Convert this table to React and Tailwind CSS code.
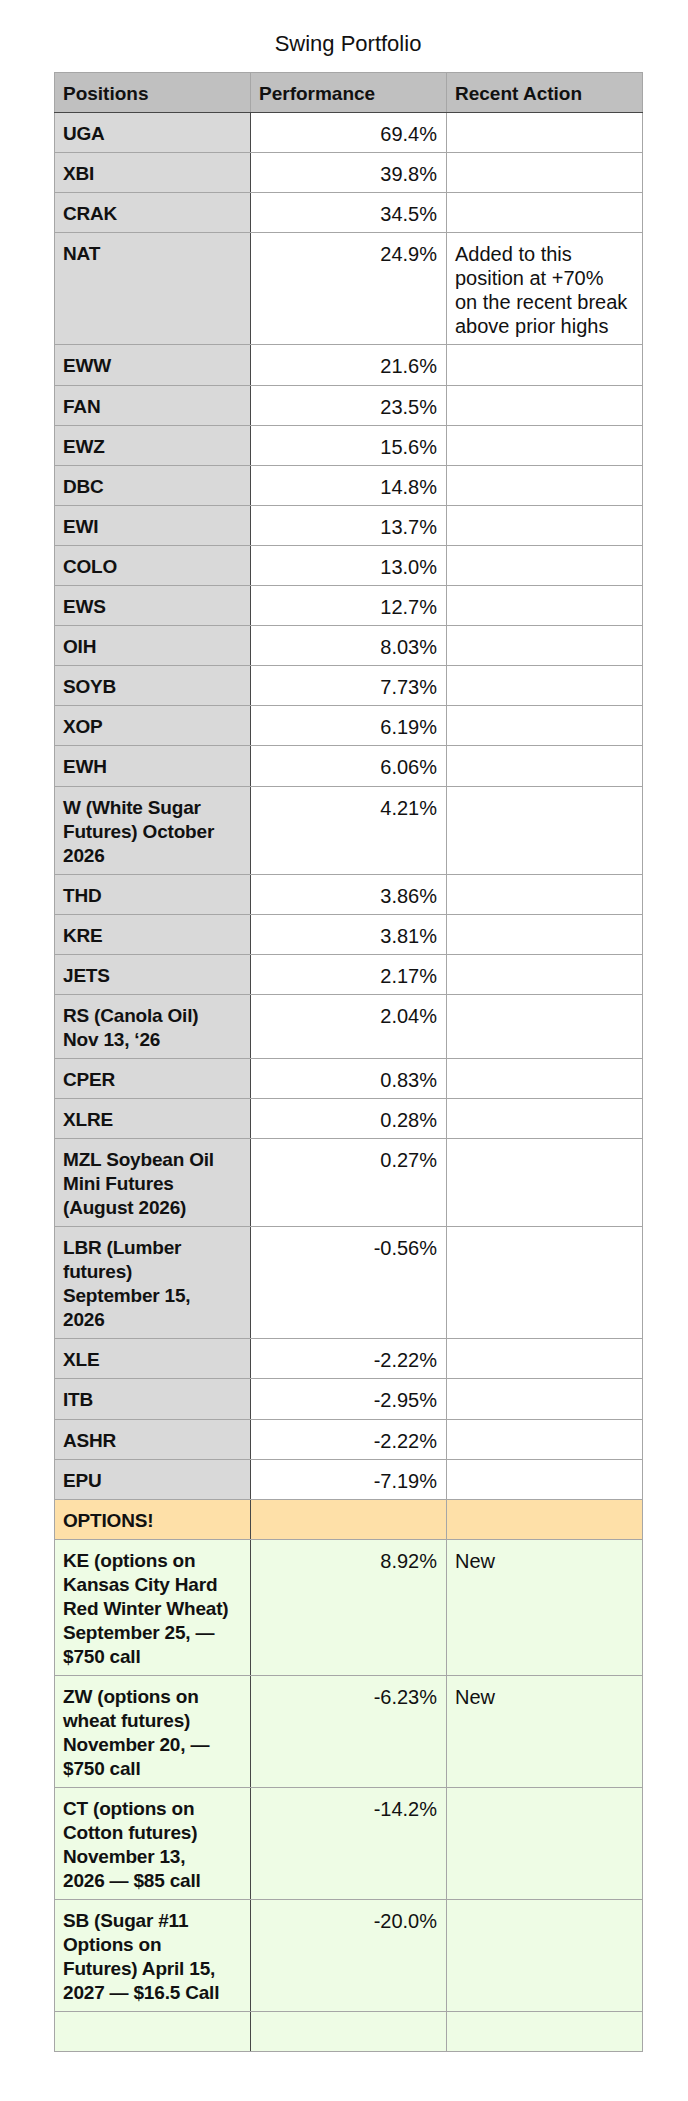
import React from "react";

const rows = [
  { pos: ["UGA"], perf: "69.4%" },
  { pos: ["XBI"], perf: "39.8%" },
  { pos: ["CRAK"], perf: "34.5%" },
  {
    pos: ["NAT"],
    perf: "24.9%",
    action: ["Added to this", "position at +70%", "on the recent break", "above prior highs"],
  },
  { pos: ["EWW"], perf: "21.6%" },
  { pos: ["FAN"], perf: "23.5%" },
  { pos: ["EWZ"], perf: "15.6%" },
  { pos: ["DBC"], perf: "14.8%" },
  { pos: ["EWI"], perf: "13.7%" },
  { pos: ["COLO"], perf: "13.0%" },
  { pos: ["EWS"], perf: "12.7%" },
  { pos: ["OIH"], perf: "8.03%" },
  { pos: ["SOYB"], perf: "7.73%" },
  { pos: ["XOP"], perf: "6.19%" },
  { pos: ["EWH"], perf: "6.06%" },
  { pos: ["W (White Sugar", "Futures) October", "2026"], perf: "4.21%" },
  { pos: ["THD"], perf: "3.86%" },
  { pos: ["KRE"], perf: "3.81%" },
  { pos: ["JETS"], perf: "2.17%" },
  { pos: ["RS (Canola Oil)", "Nov 13, \u201826"], perf: "2.04%" },
  { pos: ["CPER"], perf: "0.83%" },
  { pos: ["XLRE"], perf: "0.28%" },
  { pos: ["MZL Soybean Oil", "Mini Futures", "(August 2026)"], perf: "0.27%" },
  { pos: ["LBR (Lumber", "futures)", "September 15,", "2026"], perf: "-0.56%" },
  { pos: ["XLE"], perf: "-2.22%" },
  { pos: ["ITB"], perf: "-2.95%" },
  { pos: ["ASHR"], perf: "-2.22%" },
  { pos: ["EPU"], perf: "-7.19%" },
];

const options = [
  {
    pos: ["KE (options on", "Kansas City Hard", "Red Winter Wheat)", "September 25, \u2014", "$750 call"],
    perf: "8.92%",
    action: ["New"],
  },
  {
    pos: ["ZW (options on", "wheat futures)", "November 20, \u2014", "$750 call"],
    perf: "-6.23%",
    action: ["New"],
  },
  {
    pos: ["CT (options on", "Cotton futures)", "November 13,", "2026 \u2014 $85 call"],
    perf: "-14.2%",
  },
  {
    pos: ["SB (Sugar #11", "Options on", "Futures) April 15,", "2027 \u2014 $16.5 Call"],
    perf: "-20.0%",
  },
];

function Lines({ lines }) {
  if (!lines) return <>{"\u00a0"}</>;
  return lines.map((l, i) => (
    <React.Fragment key={i}>
      {i > 0 && <br />}
      {l}
    </React.Fragment>
  ));
}

const cellBase =
  "align-top pt-[9px] pb-[6.1px] leading-[24px] border border-[#a6a6a6] whitespace-nowrap";
const posCell =
  cellBase + " pl-2 pr-2 text-[19px] font-bold tracking-[-0.01em] border-r-[#474747]";
const perfCell = cellBase + " pl-2 pr-[9px] text-right text-[20px]";
const actCell = cellBase + " pl-2 pr-2 text-left text-[20px]";
const headCell =
  cellBase + " pl-2 pr-2 text-left text-[19px] font-bold border-b-[#474747]";

export default function App() {
  return (
    <div
      className="min-h-[2101px] bg-white text-[#111111]"
      style={{ fontFamily: '"Liberation Sans", Arial, Helvetica, sans-serif' }}
    >
      <div className="ml-[54px] w-[588px] pt-[30px]">
        <h1 className="text-center text-[22px] leading-[28px] font-normal mb-[14px]">
          Swing Portfolio
        </h1>
        <table className="w-[588px] table-fixed border-collapse">
          <colgroup>
            <col className="w-[196px]" />
            <col className="w-[196px]" />
            <col className="w-[196px]" />
          </colgroup>
          <thead>
            <tr className="bg-[#c0c0c0]">
              <th className={headCell}>Positions</th>
              <th className={headCell}>Performance</th>
              <th className={headCell}>Recent Action</th>
            </tr>
          </thead>
          <tbody>
            {rows.map((r, i) => (
              <tr key={i}>
                <td className={posCell + " bg-[#d9d9d9]"}>
                  <Lines lines={r.pos} />
                </td>
                <td className={perfCell + " bg-white"}>{r.perf}</td>
                <td className={actCell + " bg-white"}>
                  <Lines lines={r.action} />
                </td>
              </tr>
            ))}
            <tr className="bg-[#fee0a8]">
              <td className={posCell}>OPTIONS!</td>
              <td className={perfCell}>{"\u00a0"}</td>
              <td className={actCell}>{"\u00a0"}</td>
            </tr>
            {options.map((r, i) => (
              <tr key={"o" + i} className="bg-[#eefce5]">
                <td className={posCell}>
                  <Lines lines={r.pos} />
                </td>
                <td className={perfCell}>{r.perf}</td>
                <td className={actCell}>
                  <Lines lines={r.action} />
                </td>
              </tr>
            ))}
            <tr className="bg-[#eefce5]">
              <td className={posCell}>{"\u00a0"}</td>
              <td className={perfCell}>{"\u00a0"}</td>
              <td className={actCell}>{"\u00a0"}</td>
            </tr>
          </tbody>
        </table>
      </div>
    </div>
  );
}
